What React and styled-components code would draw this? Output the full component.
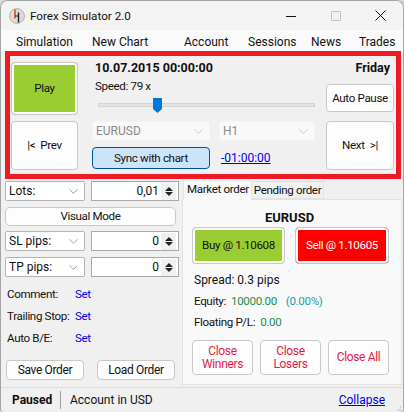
import React from 'react';
import styled, { createGlobalStyle } from 'styled-components';
import { ChevronDown } from 'lucide-react';

const GlobalStyle = createGlobalStyle`
  html, body {
    margin: 0;
    padding: 0;
    background: #d8d8d8;
  }
  * {
    box-sizing: border-box;
  }
`
const Window = styled.div`
  width: 404px;
  height: 412px;
  display: flex;
  flex-direction: column;
  overflow: hidden;
  background: #f0f0f0;
  border: 1px solid #a4a4a4;
  border-bottom: 0;
  border-radius: 8px 8px 4px 4px;
  font-family: Roboto, "Liberation Sans", sans-serif;
  font-size: 11.6px;
  letter-spacing: -0.35px;
  color: #111;
`
const TitleBar = styled.div`
  height: 29px;
  flex: none;
  display: flex;
  align-items: center;
  padding-left: 8px;
  background: #f3f3f3;
`
const AppTitle = styled.span`
  margin-left: 5px;
  flex: 1;
  font-size: 11.7px;
  letter-spacing: 0;
`
const WinButton = styled.div`
  width: 45px;
  height: 29px;
  display: flex;
  align-items: center;
  justify-content: center;
`
const MenuBar = styled.div`
  height: 21px;
  flex: none;
  display: grid;
  grid-template-columns: 76px 92px 64px 63px 48px auto;
  align-items: center;
  padding: 2px 0 0 15px;
  background: #fafafa;
  font-size: 12px;
  letter-spacing: 0;
`
const ControlPanel = styled.div`
  flex: none;
  height: 128px;
  margin: 0 2px 0 4px;
  padding: 6px 2px 0 1px;
  border: 5px solid #ed1c24;
  display: flex;
  flex-direction: column;
  gap: 6px;
  background: #f0f0f0;
`
const PanelRow = styled.div`
  display: flex;
  gap: 11px;
`
const FlatButton = styled.div`
  display: flex;
  align-items: center;
  justify-content: center;
  text-align: center;
  width: ${p => p.$w}px;
  height: ${p => p.$h}px;
  flex: none;
  background: #fdfdfd;
  border: 1px solid #c8c8c8;
  border-radius: 4px;
  color: ${p => p.$danger ? '#e8174c' : '#111'};
  font-size: ${p => p.$size || 11.6}px;
  line-height: 13px;
  margin-top: ${p => p.$mt || 0}px;
`
const ColorButton = styled(FlatButton)`
  border: 1px solid #c8c8c8;
  background: ${p => p.$fill};
  box-shadow: inset 0 0 0 2px #fdfdfd;
  color: ${p => p.$light ? '#fff' : '#111'};
`
const PrevSlot = styled.div`
  margin-right: 3px;
`
const Info = styled.div`
  flex: 1;
  margin-top: -3px;
  display: flex;
  flex-direction: column;
`
const InfoHead = styled.div`
  display: flex;
  justify-content: space-between;
  padding: 0 4px 0 3px;
  height: 17px;
  font-size: 12.5px;
  letter-spacing: 0;
  font-weight: 700;
  align-items: center;
`
const InfoBody = styled.div`
  display: flex;
  gap: 11px;
`
const SpeedBlock = styled.div`
  flex: 1;
  padding-left: 3px;
`
const SpeedLabel = styled.div`
  height: 18px;
  line-height: 18px;
  margin-top: 1px;
`
const Track = styled.div`
  position: relative;
  margin: 8px 0 0 3px;
  height: 4px;
  background: #e4e4e4;
  border: 1px solid #d4d4d4;
`
const Thumb = styled.svg`
  position: absolute;
  display: block;
  top: -6px;
  left: ${p => p.$left}px;
  width: 9px;
  height: 15px;
`
const SelectGrid = styled.div`
  width: 223px;
  flex: none;
  display: grid;
  grid-template-columns: 118px 96px;
  column-gap: 9px;
  row-gap: 6px;
  grid-template-rows: 20px 22px;
`
const Select = styled.div`
  display: flex;
  align-items: center;
  justify-content: space-between;
  padding: 0 3px;
  background: ${p => p.$disabled ? '#f9f9f9' : '#fff'};
  color: ${p => p.$disabled ? '#8a8a8a' : '#111'};
  border: 1px solid ${p => p.$disabled ? '#f4f4f4' : '#b4b4b4'};
  border-radius: 2px;
  height: 20px;
  font-size: 12px;
  letter-spacing: 0;
  width: ${p => p.$w ? p.$w + 'px' : 'auto'};
`
const SyncButton = styled.div`
  display: flex;
  align-items: center;
  justify-content: center;
  background: #cce4f7;
  border: 1px solid #005499;
  border-radius: 4px;
`
const Link = styled.a`
  color: #0000ee;
  text-decoration: underline;
  font-size: 12px;
  letter-spacing: 0;
`
const OffsetLink = styled(Link)`
  align-self: center;
  margin-left: 2px;
`
const Body = styled.div`
  flex: 1;
  display: flex;
  padding-left: 4px;
`
const LeftColumn = styled.div`
  width: 178px;
  flex: none;
  padding-top: 2px;
  display: flex;
  flex-direction: column;
`
const FieldRow = styled.div`
  display: flex;
  gap: 6px;
  margin-bottom: ${p => p.$mb}px;
`
const Spinner = styled.div`
  width: 88px;
  height: 20px;
  display: flex;
  align-items: center;
  justify-content: flex-end;
  padding: 0 2px 0 0;
  background: #fff;
  border: 1px solid #a8a8a8;
  font-size: 12px;
  letter-spacing: 0;
`
const SpinButtons = styled.div`
  width: 15px;
  height: 17px;
  margin-left: 2px;
  display: flex;
  flex-direction: column;
  background: #f0f0f0;
  gap: 1px;
  align-items: center;
  justify-content: center;
`
const Arrow = styled.div`
  width: 0;
  height: 0;
  border-left: 4px solid transparent;
  border-right: 4px solid transparent;
  border-${p => p.$down ? 'top' : 'bottom'}: 4px solid #222;
`
const WideButton = styled(FlatButton)`
  border-radius: 5px;
  margin-bottom: 5px;
`
const InfoList = styled.div`
  padding: 10px 0 0 2px;
  display: flex;
  flex-direction: column;
  gap: 7px;
`
const InfoLine = styled.div`
  display: grid;
  grid-template-columns: 68px auto;
  height: 15px;
  line-height: 15px;
  white-space: nowrap;
`
const SetLink = styled.span`
  color: #0000ee;
`
const OrderButtons = styled.div`
  display: flex;
  gap: 13px;
  padding: 14px 0 0 1px;
`
const OrderSide = styled.div`
  flex: 1;
  margin-left: -1px;
  padding-right: 1px;
  display: flex;
  flex-direction: column;
`
const Tabs = styled.div`
  display: flex;
  align-items: flex-end;
  height: 20px;
  padding-left: 1px;
  position: relative;
  z-index: 1;
`
const Tab = styled.div`
  height: ${p => p.$active ? 20 : 18}px;
  padding: 0 2px 0 ${p => p.$active ? 3 : 2}px;
  margin-bottom: ${p => p.$active ? -1 : 0}px;
  line-height: 16px;
  background: ${p => p.$active ? '#f9f9f9' : '#f0f0f0'};
  border: 1px solid #e2e2e2;
  border-bottom: ${p => p.$active ? 0 : '1px solid #e2e2e2'};
  border-right: ${p => p.$active ? 0 : '1px solid #e2e2e2'};
`
const OrderPanel = styled.div`
  height: 186px;
  background: #f9f9f9;
  border: 1px solid #e2e2e2;
  padding: 0 9px;
`
const PairTitle = styled.div`
  height: 27px;
  line-height: 35px;
  padding-right: 5px;
  text-align: center;
  font-weight: 700;
  font-size: 13px;
  letter-spacing: 0;
`
const TradeRow = styled.div`
  display: flex;
  gap: 10px;
`
const Stats = styled.div`
  padding: 9px 0 0 2px;
  display: flex;
  flex-direction: column;
  gap: 6px;
`
const StatLine = styled.div`
  height: 15px;
  line-height: 15px;
  font-size: ${p => p.$size || 11.6}px;
  letter-spacing: ${p => p.$size ? 0 : -0.35}px;
`
const Green = styled.span`
  color: #17904d;
`
const Teal = styled.span`
  color: #18a0a8;
  margin-left: 9px;
`
const CloseRow = styled.div`
  display: flex;
  gap: 7px;
  margin-top: 10px;
`
const StatusBar = styled.div`
  flex: none;
  height: 25px;
  display: flex;
  align-items: center;
  border-top: 1px solid #dcdcdc;
  padding: 0 0 0 11px;
  margin-top: 2px;
  font-size: 12px;
  letter-spacing: 0;
`
const StatusStrong = styled.span`
  font-weight: 700;
  width: 39px;
`
const StatusText = styled.span`
  flex: 1;
  margin-left: 9px;
  padding-left: 9px;
  border-left: 1px solid #a0a0a0;
  line-height: 18px;
`
const Grip = styled.svg`
  width: 18px;
  height: 24px;
  flex: none;
`

const Logo = () => (
  <svg width="16" height="16" viewBox="0 0 16 16">
    <circle cx="8" cy="8" r="7.5" fill="#dedbd6" stroke="#a8a8a8" strokeWidth="0.8" />
    <path d="M6 1.5v9" stroke="#c8401f" strokeWidth="1.4" />
    <path d="M6 8h3" stroke="#222" strokeWidth="1.1" />
    <path d="M9.5 4.5v10" stroke="#222" strokeWidth="1.4" />
  </svg>
)

const Chevron = ({ color }) => (
  <ChevronDown size={15} strokeWidth={1} color={color} />
)

const NumberField = ({ value }) => (
  <Spinner>
    {value}
    <SpinButtons>
      <Arrow />
      <Arrow $down />
    </SpinButtons>
  </Spinner>
)

const PipRow = ({ label, value, mb }) => (
  <FieldRow $mb={mb}>
    <Select $w={80}>{label}<Chevron color="#666" /></Select>
    <NumberField value={value} />
  </FieldRow>
)

const App = () => (
  <Window>
    <GlobalStyle />
    <TitleBar>
      <Logo />
      <AppTitle>Forex Simulator 2.0</AppTitle>
      <WinButton>
        <svg width="10" height="10"><path d="M0 5.5h10" stroke="#111" /></svg>
      </WinButton>
      <WinButton>
        <svg width="10" height="10"><rect x="0.5" y="0.5" width="9" height="9" rx="1" fill="none" stroke="#c0c0c0" /></svg>
      </WinButton>
      <WinButton>
        <svg width="11" height="11"><path d="M0.5 0.5l10 10M10.5 0.5l-10 10" stroke="#111" /></svg>
      </WinButton>
    </TitleBar>
    <MenuBar>
      <span>Simulation</span>
      <span>New Chart</span>
      <span>Account</span>
      <span>Sessions</span>
      <span>News</span>
      <span>Trades</span>
    </MenuBar>
    <ControlPanel>
      <PanelRow>
        <PrevSlot>
          <ColorButton $w={67} $h={53} $fill="#9acd32">Play</ColorButton>
        </PrevSlot>
        <Info>
          <InfoHead>
            <span>10.07.2015 00:00:00</span>
            <span>Friday</span>
          </InfoHead>
          <InfoBody>
            <SpeedBlock>
              <SpeedLabel>Speed: 79 x</SpeedLabel>
              <Track>
                <Thumb viewBox="0 0 9 15" $left={54}>
                  <path d="M0 0h9v11l-4.5 4L0 11z" fill="#0078d7" />
                </Thumb>
              </Track>
            </SpeedBlock>
            <FlatButton $w={68} $h={28} $mt={8}>Auto Pause</FlatButton>
          </InfoBody>
        </Info>
      </PanelRow>
      <PanelRow>
        <PrevSlot>
          <FlatButton $w={67} $h={49}>|&lt;&nbsp; Prev</FlatButton>
        </PrevSlot>
        <SelectGrid>
          <Select $disabled>EURUSD<Chevron color="#aaa" /></Select>
          <Select $disabled>H1<Chevron color="#aaa" /></Select>
          <SyncButton>Sync with chart</SyncButton>
          <OffsetLink>-01:00:00</OffsetLink>
        </SelectGrid>
        <FlatButton $w={68} $h={49}>Next &nbsp;&gt;|</FlatButton>
      </PanelRow>
    </ControlPanel>
    <Body>
      <LeftColumn>
        <PipRow label="Lots:" value="0,01" mb={6} />
        <WideButton $w={171} $h={19}>Visual Mode</WideButton>
        <PipRow label="SL pips:" value="0" mb={6} />
        <PipRow label="TP pips:" value="0" mb={0} />
        <InfoList>
          <InfoLine><span>Comment:</span><SetLink>Set</SetLink></InfoLine>
          <InfoLine><span>Trailing Stop:</span><SetLink>Set</SetLink></InfoLine>
          <InfoLine><span>Auto B/E:</span><SetLink>Set</SetLink></InfoLine>
        </InfoList>
        <OrderButtons>
          <FlatButton $w={78} $h={20} $size={12}>Save Order</FlatButton>
          <FlatButton $w={78} $h={20} $size={12}>Load Order</FlatButton>
        </OrderButtons>
      </LeftColumn>
      <OrderSide>
        <Tabs>
          <Tab $active>Market order</Tab>
          <Tab>Pending order</Tab>
        </Tabs>
        <OrderPanel>
          <PairTitle>EURUSD</PairTitle>
          <TradeRow>
            <ColorButton $w={93} $h={37} $fill="#9acd32">Buy @ 1.10608</ColorButton>
            <ColorButton $w={94} $h={37} $fill="#ff0000" $light>Sell @ 1.10605</ColorButton>
          </TradeRow>
          <Stats>
            <StatLine $size={12}>Spread: 0.3 pips</StatLine>
            <StatLine>Equity: &nbsp;<Green>10000.00</Green><Teal>(0.00%)</Teal></StatLine>
            <StatLine>Floating P/L: &nbsp;<Green>0.00</Green></StatLine>
          </Stats>
          <CloseRow>
            <FlatButton $w={61} $h={35} $danger $size={12}>Close Winners</FlatButton>
            <FlatButton $w={61} $h={35} $danger $size={12}>Close Losers</FlatButton>
            <FlatButton $w={61} $h={35} $danger $size={12}>Close All</FlatButton>
          </CloseRow>
        </OrderPanel>
      </OrderSide>
    </Body>
    <StatusBar>
      <StatusStrong>Paused</StatusStrong>
      <StatusText>Account in USD</StatusText>
      <Link>Collapse</Link>
      <Grip viewBox="0 0 18 24">
        <path d="M14 22h2M15 19h1M12 22h1" stroke="#a8a8a8" strokeWidth="1" />
      </Grip>
    </StatusBar>
  </Window>
);

export default App;
